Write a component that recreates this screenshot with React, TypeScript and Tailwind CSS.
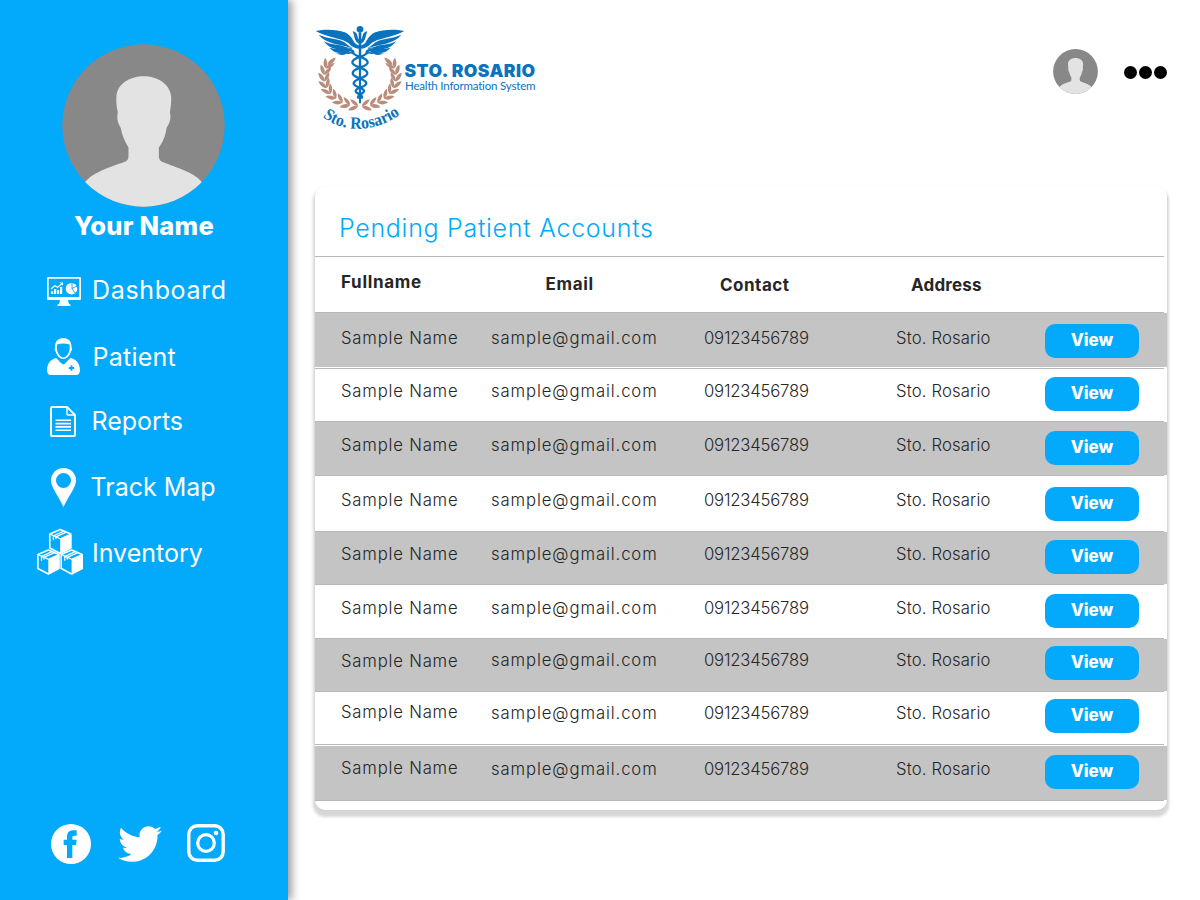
import type { ReactNode } from "react";
import { FaTwitter } from "react-icons/fa";

const rows = [
  { band: true, height: "h-[55px] pb-px", name: "mt-[15px]", info: "mt-[15px]", button: "mt-[11px]" },
  { band: false, height: "h-[52px]", name: "mt-[12px]", info: "mt-[12px]", button: "mt-[8px]" },
  { band: true, height: "h-[53px]", name: "mt-[13px]", info: "mt-[13px]", button: "mt-[9px]" },
  { band: false, height: "h-[55px]", name: "mt-[14px]", info: "mt-[14px]", button: "mt-[11px]" },
  { band: true, height: "h-[52px]", name: "mt-[12px]", info: "mt-[12px]", button: "mt-[8px]" },
  { band: false, height: "h-[53px]", name: "mt-[13px]", info: "mt-[13px]", button: "mt-[9px]" },
  { band: true, height: "h-[52px]", name: "mt-[12px]", info: "mt-[11px]", button: "mt-[7px]" },
  { band: false, height: "h-[52px]", name: "mt-[10px]", info: "mt-[11px]", button: "mt-[7px]" },
  { band: true, height: "h-[55px] pt-px", name: "mt-[12px]", info: "mt-[13px]", button: "mt-[9px]" },
];

function Avatar({ className, id }: { className: string; id: string }) {
  return (
    <svg className={className} viewBox="97 41 488 487" aria-hidden="true">
      <clipPath id={id}>
        <circle cx="341" cy="284.5" r="243" />
      </clipPath>
      <circle cx="341" cy="284.5" r="243" fill="#888888" />
      <path
        clipPath={`url(#${id})`}
        fill="#e3e3e3"
        d="M164 458C182 427 245 408 283 394Q296 390 296 378V350C285 332 277 315 273 292C262 275 261 262 264 244C260 228 259 215 260 196C263 160 300 137 341 137C384 137 421 160 424 200C424 215 423 230 420 244C424 262 421 275 410 292C407 315 400 332 387 350V378Q388 390 398 394C440 411 500 427 518 458V530H164Z"
      />
    </svg>
  );
}

function Leaf({ x, y, angle, size = 1 }: { x: number; y: number; angle: number; size?: number }) {
  return (
    <path
      d="M0 0C7 -8 18 -9 31 -3C23 5 10 6 0 0Z"
      transform={`translate(${x} ${y}) rotate(${angle}) scale(${size})`}
    />
  );
}

function Branch() {
  const steps = [0, 1, 2, 3, 4, 5, 6, 7, 8];
  return (
    <g>
      {steps.map((step) => {
        const t = ((93 + step * 13) * Math.PI) / 180;
        const x = 180 + 107 * Math.cos(t);
        const y = 186 + 87 * Math.sin(t);
        const heading = (Math.atan2(87 * Math.cos(t), -107 * Math.sin(t)) * 180) / Math.PI;
        return (
          <g key={step}>
            <Leaf x={x} y={y} angle={heading - 20} size={1.05} />
            <Leaf x={x} y={y} angle={heading + 42} size={0.98} />
          </g>
        );
      })}
      <Leaf x={83} y={150} angle={-38} size={1.05} />
    </g>
  );
}

function Wing() {
  return (
    <g>
      <path d="M47 48C76 42 112 43 134 52C153 60 158 76 164 83C169 89 175 91 180 91V101C164 102 153 92 145 84C128 70 82 68 47 48Z" />
      <path d="M56 59C87 74 122 68 141 88C146 93 150 95 156 97C150 99 143 96 138 94C104 86 75 83 56 59Z" />
      <path d="M72 79C94 91 114 87 138 96C145 99 150 98 157 98C150 102 142 101 134 102C107 106 86 99 72 79Z" />
      <path d="M88 98C108 104 121 100 140 102C149 102 152 99 158 98C150 104 140 108 133 112C117 117 100 112 88 98Z" />
      <path d="M108 115C124 117 133 107 158 99C145 108 138 129 108 115Z" />
      <path d="M180 87C169 84 164 74 162 61L158 49C166 50 171 56 172 62C173 69 176 74 180 74Z" />
    </g>
  );
}

function Logo() {
  return (
    <svg className="h-[125px] w-[105px] shrink-0" viewBox="0 0 315 375">
      <g fill="#b98d7b">
        <Branch />
        <g transform="matrix(-1 0 0 1 360 0)">
          <Branch />
        </g>
      </g>
      <g fill="#0a73bd">
        <Wing />
        <g transform="matrix(-1 0 0 1 360 0)">
          <Wing />
        </g>
        <circle cx="180" cy="43" r="10" />
        <path d="M176 52H184L183 262L180 267L177 262Z" />
      </g>
      <g fill="none" stroke="#0a73bd" strokeWidth="7" strokeLinecap="round">
        <path d="M137 112C145 102 160 105 160 113C160 125 203 125 203 142C203 158 158 157 158 175C158 190 199 190 199 205C199 218 167 216 167 228C167 237 188 237 186 248" />
        <path d="M223 112C215 102 200 105 200 113C200 125 157 125 157 142C157 158 202 157 202 175C202 190 161 190 161 205C161 218 192 216 192 228C192 237 173 237 174 248" />
        <path d="M137 112C146 119 150 109 158 115M223 112C214 119 210 109 202 115" strokeWidth="5" />
      </g>
      <path id="motto" d="M68 305C120 351 225 359 306 294" fill="none" />
      <text
        fill="#0a73bd"
        fontSize="51"
        className="font-['Liberation_Serif',serif] font-bold"
        textLength="250"
        lengthAdjust="spacingAndGlyphs"
      >
        <textPath href="#motto">Sto. Rosario</textPath>
      </text>
    </svg>
  );
}

function DashboardIcon() {
  return (
    <svg className="size-[46px] shrink-0" viewBox="37 268 46 46" fill="#fff">
      <path fillRule="evenodd" d="M48 277H80Q81 277 81 278V299Q81 300 80 300H48Q47 300 47 299V278Q47 277 48 277ZM48.7 278.7V297H79.3V278.7Z" />
      <path d="M60 299H68L68.5 303L70.5 305V306H57.5V305L59.5 303Z" />
      <path d="M51 291.3H53.2V294H51ZM54 289H56.2V294H54ZM57 290H59.2V294H57ZM60 287H62.2V294H60Z" />
      <path d="M51 289L55 285.5L57.5 287.5L62 283.5" fill="none" stroke="#fff" strokeWidth="1.2" />
      <path d="M59.7 282.5H63V285.8Z" />
      <circle cx="71.5" cy="288.7" r="5.8" />
      <path d="M72 282.5V288.5L77 286M72 288.5L75 293" fill="none" stroke="#03a9fa" strokeWidth="0.9" />
    </svg>
  );
}

function PatientIcon() {
  return (
    <svg className="size-[46px] shrink-0" viewBox="37 334 46 46" fill="#fff">
      <path fillRule="evenodd" d="M63.3 338C68.6 338 71.7 341.5 71.5 347C72.4 349 71.8 351 71 351.5C69.8 356 66.7 359 63.3 359C59.9 359 56.8 356 55.6 351.5C54.8 351 54.2 349 55.1 347C54.9 341.5 58 338 63.3 338ZM57 344.5C55.9 352 60 357.5 63.3 357.5C66.7 357.5 70.7 352 69.6 344.5C65.5 343 61.1 343 57 344.5Z" />
      <path d="M56 358C59 360 60 363 63.3 364.5C66.6 363 67.6 360 70.6 358C77 360 79.5 363 80 370Q80 375 76 375H51Q47 375 47 370C47.5 363 50 360 56 358Z" />
      <path d="M71.5 365.3V370.7M68.8 368H74.2" stroke="#03a9fa" strokeWidth="1.8" />
    </svg>
  );
}

function ReportIcon() {
  return (
    <svg className="size-[46px] shrink-0" viewBox="37 399 46 46" fill="none" stroke="#fff" strokeWidth="1.9" strokeLinejoin="round">
      <path d="M52 407H67L75 415V435Q75 436 74 436H52Q51 436 51 435V408Q51 407 52 407Z" />
      <path d="M67 407V414Q67 415 68 415H75" strokeWidth="1.4" />
      <path d="M55.5 420.3H71M55.5 423.6H71M55.5 426.9H71M55.5 430.2H71" strokeWidth="1.6" />
    </svg>
  );
}

function PinIcon() {
  return (
    <svg className="size-[46px] shrink-0" viewBox="37 465 46 46" fill="#fff">
      <path
        fillRule="evenodd"
        d="M63.5 468C70.5 468 76 473.5 76 480.3C76 487.5 70 493.5 63.5 507C57 493.5 51 487.5 51 480.3C51 473.5 56.5 468 63.5 468ZM63.5 473A7.5 7.5 0 1 0 63.5 488A7.5 7.5 0 1 0 63.5 473Z"
      />
    </svg>
  );
}

function Box({ x, y }: { x: number; y: number }) {
  return (
    <g transform={`translate(${x} ${y})`}>
      <path d="M11.5 1L22 5.5V19.5L11.5 25L1 19.5V5.5Z" fill="none" stroke="#fff" strokeWidth="1.6" strokeLinejoin="round" />
      <path d="M11.4 10.5L22.5 5.5V19.5L11.4 25Z" />
      <path d="M1 5.5L11.5 10.3L22 5.5" fill="none" stroke="#fff" strokeWidth="1.3" />
      <path d="M4.6 11.8V7.4L15 2.6M7 10.4V8.4L17.6 3.7" fill="none" stroke="#fff" strokeWidth="1.3" />
    </g>
  );
}

function InventoryIcon() {
  return (
    <svg className="size-[46px] shrink-0 overflow-visible" viewBox="37 530 46 46" fill="#fff">
      <Box x={48.8} y={528.5} />
      <Box x={36.9} y={549} />
      <Box x={60.2} y={549} />
    </svg>
  );
}

function NavItem({ icon, label, className }: { icon: ReactNode; label: string; className: string }) {
  return (
    <li className="flex h-[46px] items-center pl-[37px]">
      {icon}
      <span className={`whitespace-nowrap text-[25px] leading-none text-white ${className}`}>{label}</span>
    </li>
  );
}

function Sidebar() {
  return (
    <aside className="relative flex h-[900px] w-[288px] shrink-0 flex-col bg-[#03a9fa] shadow-[4px_0_8px_rgba(0,0,0,0.38)]">
      <Avatar className="mt-[43.5px] ml-[62px] h-[163px] w-[163px]" id="profile" />
      <p className="mt-[6.5px] ml-[74px] h-[25px] text-[25.5px] leading-[25px] font-extrabold tracking-[0.25px] whitespace-nowrap text-white">
        Your Name
      </p>
      <ul className="mt-[29.5px] flex flex-col">
        <NavItem icon={<DashboardIcon />} label="Dashboard" className="ml-[9px] tracking-[0.65px]" />
        <li className="h-[20px]" />
        <NavItem icon={<PatientIcon />} label="Patient" className="mt-[2px] ml-[9.5px] tracking-[0.25px]" />
        <li className="h-[19px]" />
        <NavItem icon={<ReportIcon />} label="Reports" className="ml-[8.5px]" />
        <li className="h-[20px]" />
        <NavItem icon={<PinIcon />} label="Track Map" className="ml-[7.5px]" />
        <li className="h-[19px]" />
        <NavItem icon={<InventoryIcon />} label="Inventory" className="mt-[2px] ml-[9px]" />
      </ul>
      <div className="mt-auto mb-[34px] flex items-start pl-[51px]">
        <svg className="size-[40px]" viewBox="63 39 120 120">
          <circle cx="123" cy="99" r="60" fill="#fff" />
          <path fill="#03a9fa" d="M111 141V102H101V86H111V78C111 64 118 58 130 58H140V74H133C129 74 127 76 127 80V86H140L138 102H127V141Z" />
        </svg>
        <FaTwitter className="-mt-[2px] ml-[27px] size-[44px] text-white" />
        <svg className="ml-[25px] size-[38px]" viewBox="0 0 38 38" fill="none" stroke="#fff">
          <rect x="1.8" y="1.8" width="34.4" height="34.4" rx="8.5" strokeWidth="3.4" />
          <circle cx="19" cy="19" r="8.3" strokeWidth="3.2" />
          <circle cx="29" cy="9" r="2.3" fill="#fff" stroke="none" />
        </svg>
      </div>
    </aside>
  );
}

function Divider() {
  return <div className="mr-[3px] h-px bg-[#b8b8b8]" />;
}

function PatientTable() {
  return (
    <section className="mt-[46px] ml-[27px] h-[624px] w-[852px] rounded-[10px] bg-white text-[#262626] shadow-[0_5px_3px_2px_rgba(0,0,0,0.16),0_0_2px_rgba(0,0,0,0.06)]">
      <h1 className="h-[70px] pt-[27px] pl-[24px] text-[25px] leading-[31px] font-light tracking-[0.7px] text-[#03a9fa]">
        Pending Patient Accounts
      </h1>
      <Divider />
      <div className="flex h-[55px] pt-[15px] text-[17px] leading-5 font-bold">
        <span className="w-[204px] pl-[26px] tracking-[0.7px]">Fullname</span>
        <span className="mt-[2px] w-[174px] pl-[26.5px] tracking-[0.7px]">Email</span>
        <span className="mt-[3px] w-[192px] pl-[27px] tracking-[0.5px]">Contact</span>
        <span className="mt-[3px] pl-[26px] tracking-[0.2px]">Address</span>
      </div>
      {rows.map((row, index) => (
        <div key={index}>
          <Divider />
          <div className={row.height}>
            <div
              className={`grid h-full grid-cols-[150px_213px_192px_149px_94px] items-start pl-[26px] text-[16.7px] leading-5 font-[350] whitespace-nowrap ${row.band ? "bg-[#c4c4c4]" : "bg-white"}`}
            >
              <span className={`tracking-[0.8px] ${row.name}`}>Sample Name</span>
              <span className={`tracking-[0.9px] ${row.info}`}>sample@gmail.com</span>
              <span className={`tracking-[-0.2px] ${row.info}`}>09123456789</span>
              <span className={`tracking-[0.15px] ${row.info}`}>Sto. Rosario</span>
              <button
                className={`h-[34px] w-[94px] rounded-[10px] bg-[#03a9fa] pb-[2px] text-[17px] leading-[32px] font-extrabold text-white ${row.button}`}
              >
                View
              </button>
            </div>
          </div>
        </div>
      ))}
      <Divider />
    </section>
  );
}

export default function App() {
  return (
    <div className="flex h-[900px] w-[1200px] overflow-hidden bg-white font-['Inter',sans-serif]">
      <Sidebar />
      <main className="flex min-w-0 flex-1 flex-col">
        <header className="flex h-[140px] items-start pt-[15px] pl-[12px]">
          <Logo />
          <div className="mt-[46px] text-[#0a73bd]">
            <p className="-ml-[0.5px] text-[17.5px] leading-5 font-black tracking-[0.45px] whitespace-nowrap">STO. ROSARIO</p>
            <p className="-mt-[3px] font-['Lato',sans-serif] text-[11.5px] leading-4 tracking-[-0.18px] whitespace-nowrap">
              Health Information System
            </p>
          </div>
          <Avatar className="mt-[34px] ml-auto size-[45px]" id="account" />
          <button className="mt-[51px] mr-[33px] ml-[26px] flex gap-[2px]" aria-label="More">
            <span className="size-[13px] rounded-full bg-black" />
            <span className="ml-[0.5px] size-[13px] rounded-full bg-black" />
            <span className="size-[13px] rounded-full bg-black" />
          </button>
        </header>
        <PatientTable />
      </main>
    </div>
  );
}
